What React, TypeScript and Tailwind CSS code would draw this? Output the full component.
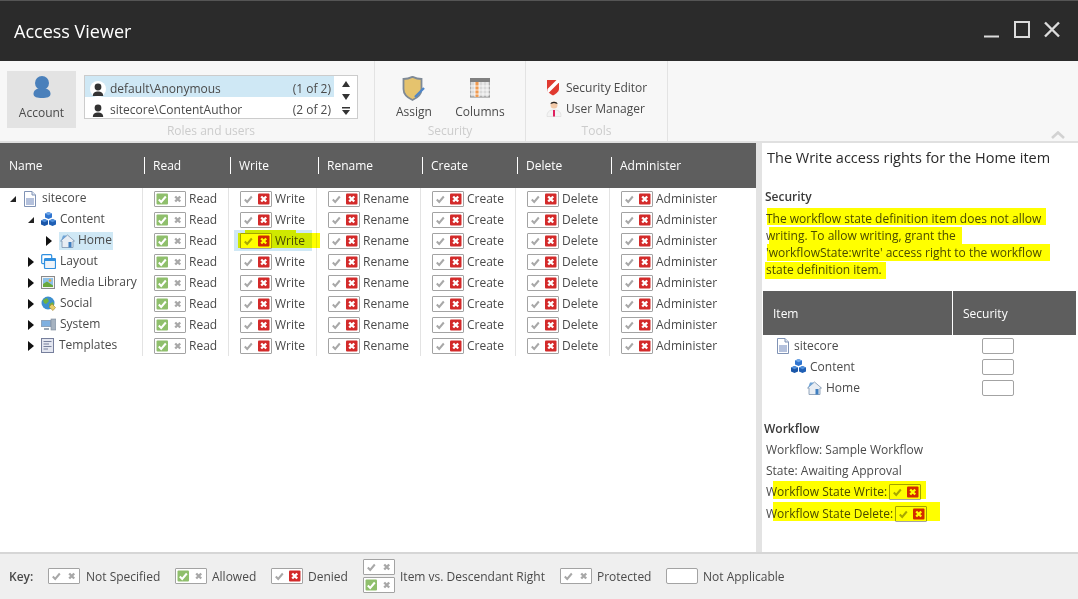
import React from "react";

type Kind = "none" | "allowed" | "denied";

function Check({ kind }: { kind: Kind }) {
  const green = kind === "allowed";
  const red = kind === "denied";
  return (
    <span className="inline-flex h-[16px] w-[32px] shrink-0 items-center justify-center rounded-[1px] border border-[#a3a3a3] bg-white">
      <svg width="30" height="14" viewBox="0 0 30 14" className="block">
        {green && <rect x="1.5" y="1.5" width="11.5" height="11" rx="1" fill="#8fbf6c" />}
        <path d="M3.8 7.5 L6.2 10 L10.8 4.5" fill="none" stroke={green ? "#ffffff" : "#a8a8a8"} strokeWidth="2" />
        {red && <rect x="17" y="1.5" width="11.5" height="11" rx="1" fill="#d32a2a" />}
        <path d="M20.2 4.5 L25.2 9.5 M25.2 4.5 L20.2 9.5" fill="none" stroke={red ? "#ffffff" : "#a8a8a8"} strokeWidth="2.4" />
      </svg>
    </span>
  );
}

function EmptyBox() {
  return <span className="block h-[16px] w-[32px] shrink-0 rounded-[2px] border border-[#a3a3a3] bg-white" />;
}

function Arrow({ open }: { open?: boolean }) {
  return open ? (
    <svg width="8" height="8" viewBox="0 0 8 8" className="shrink-0"><path d="M7 1 V7 H1 Z" fill="#222" /></svg>
  ) : (
    <svg width="8" height="10" viewBox="0 0 8 10" className="shrink-0"><path d="M1 0 L7 5 L1 10 Z" fill="#111" /></svg>
  );
}

function DocIcon() {
  return (
    <svg width="14" height="16" viewBox="0 0 14 16" className="shrink-0">
      <path d="M1.5 .5 H9 L12.5 4 V15.5 H1.5 Z" fill="#fff" stroke="#8093b5" />
      <path d="M9 .5 V4 H12.5" fill="#dfe6f2" stroke="#8093b5" />
      <rect x="3" y="7" width="8" height="7" fill="#b4c1dc" />
    </svg>
  );
}
function CubesIcon() {
  return (
    <svg width="15" height="15" viewBox="0 0 15 15" className="shrink-0">
      <path d="M7.5 0 L11 1.6 V5.4 L7.5 7 L4 5.4 V1.6 Z" fill="#2f74cf" />
      <path d="M4 1.6 L7.5 3.2 L11 1.6 L7.5 0 Z" fill="#6ea6e8" />
      <path d="M3.5 7 L7 8.6 V12.4 L3.5 14 L0 12.4 V8.6 Z" fill="#1a56a8" />
      <path d="M0 8.6 L3.5 10.2 L7 8.6 L3.5 7 Z" fill="#4f8fdc" />
      <path d="M11.5 7 L15 8.6 V12.4 L11.5 14 L8 12.4 V8.6 Z" fill="#1f5fb4" />
      <path d="M8 8.6 L11.5 10.2 L15 8.6 L11.5 7 Z" fill="#4f8fdc" />
    </svg>
  );
}
function HomeIcon() {
  return (
    <svg width="15" height="14" viewBox="0 0 15 14" className="shrink-0">
      <path d="M7.5 1 L14.5 7 H13 V13.5 H2 V7 H.5 Z" fill="#e8edf3" stroke="#7c93ad" strokeWidth=".8" />
      <path d="M3 1.5 H7 L1 7 Z" fill="#6fa3d6" />
      <rect x="8.5" y="8" width="3" height="5.5" fill="#3f7fc0" />
    </svg>
  );
}
function LayoutIcon() {
  return (
    <svg width="15" height="15" viewBox="0 0 15 15" className="shrink-0">
      <rect x=".7" y=".7" width="10" height="9" rx="1" fill="#fff" stroke="#2f8fe0" strokeWidth="1.2" />
      <rect x="3.5" y="4.5" width="11" height="10" rx="1" fill="#eef3f9" stroke="#2f8fe0" strokeWidth="1.2" />
      <rect x="3.5" y="4.5" width="11" height="2.5" fill="#2f8fe0" />
    </svg>
  );
}
function MediaIcon() {
  return (
    <svg width="14" height="13" viewBox="0 0 14 13" className="shrink-0">
      <rect x=".5" y=".5" width="13" height="12" fill="#f4f4f4" stroke="#8a8a8a" />
      <rect x="2" y="2" width="10" height="9" fill="#8cc0e8" />
      <path d="M2 11 V8 L6 5.5 L12 9.5 V11 Z" fill="#6aa83c" />
      <circle cx="9" cy="4.5" r="1.3" fill="#f2a52e" />
    </svg>
  );
}
function GlobeIcon() {
  return (
    <svg width="15" height="15" viewBox="0 0 15 15" className="shrink-0">
      <circle cx="7" cy="7" r="6.5" fill="#3d8fcf" />
      <path d="M2 4 L6 2 L8 5 L5 8 L3 7 Z M8 8 L12 6 L13 9 L9 12 Z" fill="#6fb23f" />
      <path d="M8 11 L11 8 L14.5 11.5 L12 14.5 Z" fill="#e9cf6a" stroke="#a5832a" strokeWidth=".6" />
    </svg>
  );
}
function SystemIcon() {
  return (
    <svg width="15" height="13" viewBox="0 0 15 13" className="shrink-0">
      <rect x="0" y="2" width="10" height="7" fill="#8ea4bd" />
      <rect x="1" y="3" width="8" height="5" fill="#7fb0e0" />
      <rect x="3" y="10" width="5" height="2" fill="#9aa7b5" />
      <rect x="10" y="1" width="5" height="11" fill="#a6b2c0" stroke="#7b8897" strokeWidth=".6" />
    </svg>
  );
}
function TemplateIcon() {
  return (
    <svg width="13" height="15" viewBox="0 0 13 15" className="shrink-0">
      <rect x=".5" y=".5" width="12" height="14" fill="#e3e6f0" stroke="#767f9c" />
      <path d="M2.5 3.5 H10.5 M2.5 6 H8 M2.5 8.5 H10.5 M2.5 11 H7" stroke="#767f9c" strokeWidth="1.1" />
    </svg>
  );
}

function PersonSmall() {
  return (
    <svg width="16" height="16" viewBox="0 0 16 16" className="shrink-0">
      <circle cx="8" cy="8" r="8" fill="#fff" />
      <circle cx="8" cy="6" r="3.4" fill="#333" />
      <path d="M2.8 15 C3 11.5 5 10.5 8 10.5 C11 10.5 13 11.5 13.2 15 Z" fill="#333" />
    </svg>
  );
}

const columns = [
  { name: "Read", kind: "allowed" as Kind, width: "w-[86px]" },
  { name: "Write", kind: "denied" as Kind, width: "w-[88px]" },
  { name: "Rename", kind: "denied" as Kind, width: "w-[104px]" },
  { name: "Create", kind: "denied" as Kind, width: "w-[95px]" },
  { name: "Delete", kind: "denied" as Kind, width: "w-[94px]" },
  { name: "Administer", kind: "denied" as Kind, width: "w-[145px]" },
];

const tree = [
  { name: "sitecore", indent: "pl-[9px]", open: true, icon: <DocIcon />, iconGap: "gap-[5px]" },
  { name: "Content", indent: "pl-[27px]", open: true, icon: <CubesIcon />, iconGap: "gap-[4px]" },
  { name: "Home", indent: "pl-[45px]", open: false, icon: <HomeIcon />, sel: true },
  { name: "Layout", indent: "pl-[27px]", open: false, icon: <LayoutIcon />, iconGap: "gap-[4px]" },
  { name: "Media Library", indent: "pl-[27px]", open: false, icon: <MediaIcon />, iconGap: "gap-[5px]" },
  { name: "Social", indent: "pl-[27px]", open: false, icon: <GlobeIcon />, iconGap: "gap-[4px]" },
  { name: "System", indent: "pl-[27px]", open: false, icon: <SystemIcon />, iconGap: "gap-[4px]" },
  { name: "Templates", indent: "pl-[27px]", open: false, icon: <TemplateIcon />, iconGap: "gap-[5px]" },
];

function Row({ item }: { item: (typeof tree)[number] }) {
  return (
    <div className="flex h-[21px] items-center">
      <div className={`flex h-[21px] w-[142px] items-center gap-[6px] ${item.indent}`}>
        <span className="flex w-[8px] justify-center">
          <Arrow open={item.open} />
        </span>
        {item.sel ? (
          <span className="flex h-[18px] items-center gap-[3px] bg-[#cfe8f5] pl-[1px] pr-[1px]">
            {item.icon}
            <span className="pb-[2px]">{item.name}</span>
          </span>
        ) : (
          <span className={`flex items-center ${item.iconGap}`}>
            {item.icon}
            <span className="whitespace-nowrap pb-[2px]">{item.name}</span>
          </span>
        )}
      </div>
      {columns.map((c) => (
        <div key={c.name} className={`relative flex h-[21px] items-center pl-[11px] ${c.width} border-l border-[#e3e3e3]`}>
          {item.sel && c.name === "Write" && (
            <span className="absolute left-[5px] top-0 h-[21px] w-[78px] bg-[#cfe8f5]" />
          )}
          <span className="relative flex items-center gap-[3px]">
            <Check kind={c.kind} />
            <span>{c.name}</span>
          </span>
        </div>
      ))}
    </div>
  );
}

function Hl({ className }: { className: string }) {
  return <span className={`pointer-events-none absolute bg-[#ffff00] mix-blend-multiply ${className}`} />;
}

export default function App() {
  return (
    <div className="relative flex h-[599px] w-[1078px] flex-col overflow-hidden bg-white text-[12px] leading-[17px] text-[#4a4a4a] [font-family:'Open_Sans',sans-serif]">
      {/* Title bar */}
      <div className="flex h-[61px] shrink-0 items-center justify-between border-t border-[#555555] bg-[#2b2b2b] pl-[14px] pr-[18px]">
        <span className="text-[18px] leading-[24px] text-white">Access Viewer</span>
        <div className="mt-[-3px] flex items-center gap-[14px]">
          <svg width="16" height="17" viewBox="0 0 16 17"><rect x="0" y="14.5" width="15" height="2" fill="#dcdcdc" /></svg>
          <svg width="16" height="17" viewBox="0 0 16 17"><rect x="1" y="1" width="14" height="15" fill="none" stroke="#dcdcdc" strokeWidth="2" /></svg>
          <svg width="16" height="17" viewBox="0 0 16 17"><path d="M1 1.5 L15 15.5 M15 1.5 L1 15.5" stroke="#dcdcdc" strokeWidth="2.4" /></svg>
        </div>
      </div>

      {/* Ribbon */}
      <div className="relative flex h-[82px] shrink-0 border-b-2 border-[#e0e0e0] bg-[#f7f7f7]">
        <div className="flex w-[375px] border-r border-[#e3e3e3] pl-[7px] pt-[10px]">
          <div className="flex h-[57px] w-[69px] flex-col items-center bg-[#e3e3e3] pt-[5px]">
            <svg width="18" height="22" viewBox="0 0 18 22" className="shrink-0">
              <ellipse cx="9" cy="7" rx="7" ry="7" fill="#4a80bb" />
              <path d="M.5 18 C.5 14.5 3 13 6 12.5 H12 C15 13 17.5 14.5 17.5 18 C17.5 21 14 22 9 22 C4 22 .5 21 .5 18 Z" fill="#4a80bb" />
            </svg>
            <span className="mt-[6px]">Account</span>
          </div>
          <div className="ml-[8px] mt-[4px] flex w-[274px] flex-col">
            <div className="flex h-[44px] border border-[#cccccc] bg-white">
              <div className="flex-1">
                <div className="flex h-[21px] items-center justify-between bg-[#cfe8f5] pl-[5px] pr-[3px] pt-[4px]">
                  <span className="flex items-center gap-[4px]"><PersonSmall /><span>default\Anonymous</span></span>
                  <span>(1 of 2)</span>
                </div>
                <div className="flex h-[21px] items-center justify-between pl-[5px] pr-[3px] pt-[4px]">
                  <span className="flex items-center gap-[4px]"><PersonSmall /><span>sitecore\ContentAuthor</span></span>
                  <span>(2 of 2)</span>
                </div>
              </div>
              <div className="flex w-[23px] flex-col items-center gap-[7px] pt-[5px]">
                <svg width="8" height="6" viewBox="0 0 8 6"><path d="M4 0 L8 6 H0 Z" fill="#333" /></svg>
                <svg width="8" height="6" viewBox="0 0 8 6"><path d="M0 0 H8 L4 6 Z" fill="#333" /></svg>
                <svg width="8" height="8" viewBox="0 0 8 8"><path d="M0 0 H8 V1.5 H0 Z M0 3 H8 L4 8 Z" fill="#333" /></svg>
              </div>
            </div>
            <span className="mt-[3px] pr-[20px] text-center text-[#cccccc]">Roles and users</span>
          </div>
        </div>

        <div className="flex w-[151px] flex-col border-r border-[#e3e3e3] pt-[15px]">
          <div className="flex h-[44px] pl-[20px]">
            <div className="flex w-[38px] flex-col items-center">
              <svg width="24" height="27" viewBox="0 0 24 27" className="shrink-0">
                <path d="M1.5 3 C6 3 8 2 10.5 .8 C13 2 15 3 19.5 3 V13 C19.5 19 15 22 10.5 24 C6 22 1.5 19 1.5 13 Z" fill="#e5c36e" stroke="#7f8a96" strokeWidth="1.8" />
                <path d="M13 21 L22 12" stroke="#4f86c8" strokeWidth="2.4" />
              </svg>
              <span>Assign</span>
            </div>
            <div className="ml-[17px] flex w-[60px] flex-col items-center">
              <svg width="20" height="20" viewBox="0 0 20 20" className="mt-[2px] shrink-0">
                <rect x="0" y="0" width="20" height="19" fill="#d9d9d9" stroke="#808080" />
                <rect x="0" y="0" width="20" height="4" fill="#808080" />
                <rect x="5" y="4" width="4" height="15" fill="#ef9a50" />
                <path d="M5 4 V19 M9 4 V19 M13 4 V19 M17 4 V19 M0 8 H20 M0 12 H20 M0 16 H20" stroke="#ffffff" strokeWidth=".8" />
              </svg>
              <span className="mt-[5px]">Columns</span>
            </div>
          </div>
          <span className="mt-[2px] text-center text-[#cccccc]">Security</span>
        </div>

        <div className="flex w-[142px] flex-col border-r border-[#e3e3e3] pt-[18px]">
          <div className="flex h-[41px] flex-col gap-[4px] pl-[20px]">
            <div className="flex h-[17px] items-center gap-[6px]">
              <svg width="14" height="17" viewBox="0 0 14 17" className="shrink-0">
                <path d="M1 1 H13 V10 C13 13 9 15.5 7 16.5 C5 15.5 1 13 1 10 Z" fill="#e03a30" />
                <path d="M10.5 1 H13 V3.5 L2.5 14 L1.5 12 V10 Z" fill="#fff" />
              </svg>
              <span>Security Editor</span>
            </div>
            <div className="flex h-[17px] items-center gap-[4px]">
              <svg width="16" height="17" viewBox="0 0 16 17" className="shrink-0">
                <circle cx="8" cy="5" r="3.5" fill="#f2c9a8" />
                <path d="M4.5 4 C4.5 1 11.5 1 11.5 4 L8 3 Z" fill="#222" />
                <path d="M1 16.5 C1 11 4 10 8 10 C12 10 15 11 15 16.5 Z" fill="#f3f3f3" stroke="#d8d8d8" strokeWidth=".6" />
                <path d="M7 10 H9 V16.5 H7 Z" fill="#e0205f" />
              </svg>
              <span>User Manager</span>
            </div>
          </div>
          <span className="mt-[2px] text-center text-[#cccccc]">Tools</span>
        </div>

        <svg width="14" height="8" viewBox="0 0 14 8" className="absolute bottom-[2px] right-[13px]">
          <path d="M1 7 L7 1.5 L13 7" fill="none" stroke="#d2d2d2" strokeWidth="2.6" />
        </svg>
      </div>

      {/* Body */}
      <div className="flex min-h-0 flex-1">
        <div className="flex w-[756px] shrink-0 flex-col">
          <div className="flex h-[45px] shrink-0 items-center bg-[#5e5e5e] text-white">
            <span className="w-[144px] pl-[9px]">Name</span>
            {[
              ["Read", "w-[86px]"],
              ["Write", "w-[88px]"],
              ["Rename", "w-[104px]"],
              ["Create", "w-[95px]"],
              ["Delete", "w-[94px]"],
              ["Administer", "w-[145px]"],
            ].map(([n, w]) => (
              <span key={n} className={`flex h-[17px] items-center border-l border-white pl-[8px] ${w}`}>{n}</span>
            ))}
          </div>
          <div>
            {tree.map((t) => (
              <Row key={t.name} item={t} />
            ))}
          </div>
        </div>

        <div className="w-[6px] shrink-0 bg-[#e3e3e3]" />

        <div className="flex w-[316px] shrink-0 flex-col">
          <h2 className="pl-[5px] pt-[5px] text-[14.5px] leading-[20px] text-[#2a2a2a]">The Write access rights for the Home item</h2>
          <h3 className="pl-[3px] pt-[20px] font-semibold text-[#3a3a3a]">Security</h3>
          <p className="pl-[4px] pt-[5px] text-[#4a4a4a]">
            The workflow state definition item does not allow<br />
            writing. To allow writing, grant the<br />
            'workflowState:write' access right to the workflow<br />
            state definition item.
          </p>
          <div className="ml-[1px] mt-[13px] flex h-[44px] w-[313px] shrink-0 items-center bg-[#5e5e5e] text-white">
            <span className="flex h-full w-[190px] items-center border-r border-white pl-[10px]">Item</span>
            <span className="pl-[10px]">Security</span>
          </div>
          <div className="w-[314px] pl-[1px]">
            {[
              { n: "sitecore", p: "pl-[13px]", i: <DocIcon />, g: "gap-[4px]" },
              { n: "Content", p: "pl-[28px]", i: <CubesIcon />, g: "gap-[4px]" },
              { n: "Home", p: "pl-[44px]", i: <HomeIcon />, g: "gap-[4px]" },
            ].map((r) => (
              <div key={r.n} className="flex h-[21px] items-center">
                <div className={`flex w-[219px] items-center ${r.g} ${r.p}`}>{r.i}<span>{r.n}</span></div>
                <EmptyBox />
              </div>
            ))}
          </div>
          <h3 className="pl-[2px] pt-[22px] font-semibold text-[#3a3a3a]">Workflow</h3>
          <div className="pl-[4px] pt-[2px]">
            <div className="flex h-[21px] items-center">Workflow: Sample Workflow</div>
            <div className="flex h-[21px] items-center">State: Awaiting Approval</div>
            <div className="flex h-[21px] items-center gap-[2px]">Workflow State Write: <Check kind="denied" /></div>
            <div className="flex h-[23px] items-center gap-[2px]">Workflow State Delete: <Check kind="denied" /></div>
          </div>
        </div>
      </div>

      {/* Key */}
      <div className="flex h-[47px] shrink-0 items-center border-t-2 border-[#d6d6d6] bg-[#efefef] pb-[1px] pl-[9px]">
        <span className="w-[39px] font-semibold text-[#4a4a4a]">Key:</span>
        <Check kind="none" />
        <span className="ml-[6px] w-[89px]">Not Specified</span>
        <Check kind="allowed" />
        <span className="ml-[5px] w-[59px]">Allowed</span>
        <Check kind="denied" />
        <span className="ml-[5px] w-[55px]">Denied</span>
        <div className="flex flex-col gap-[2px]">
          <Check kind="none" />
          <Check kind="allowed" />
        </div>
        <span className="ml-[5px] w-[160px]">Item vs. Descendant Right</span>
        <Check kind="none" />
        <span className="ml-[5px] w-[69px]">Protected</span>
        <EmptyBox />
        <span className="ml-[5px]">Not Applicable</span>
      </div>

      {/* Hand-drawn yellow marker strokes */}
      <Hl className="left-[245px] top-[230px] h-[4px] w-[51px]" />
      <Hl className="left-[238px] top-[233px] h-[15px] w-[82px]" />
      <Hl className="left-[767px] top-[208px] h-[17px] w-[279px]" />
      <Hl className="left-[769px] top-[227px] h-[17px] w-[193px]" />
      <Hl className="left-[767px] top-[244px] h-[17px] w-[283px]" />
      <Hl className="left-[765px] top-[262px] h-[17px] w-[121px]" />
      <Hl className="left-[773px] top-[481px] h-[18px] w-[153px]" />
      <Hl className="left-[773px] top-[502px] h-[19px] w-[167px]" />
    </div>
  );
}
